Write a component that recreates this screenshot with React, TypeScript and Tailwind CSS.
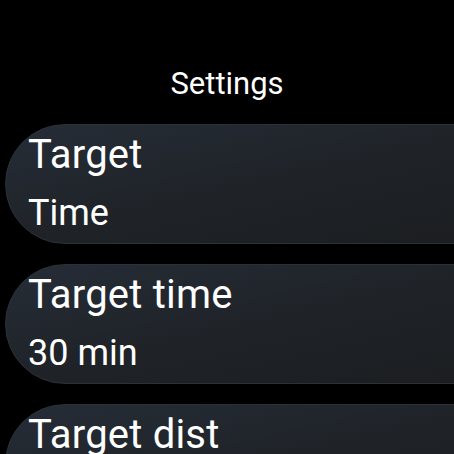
const items = [
  { label: "Target", value: "Time" },
  { label: "Target time", value: "30 min" },
  { label: "Target dist", value: "5 km" },
];

function Row({ label, value }: { label: string; value: string }) {
  return (
    <div className="flex h-[120px] w-[520px] shrink-0 flex-col rounded-l-[60px] border border-[#2c3138] bg-gradient-to-br from-[#262d37] via-[#1f2328] to-[#1b1d20] pl-[22px] pt-[7px] text-white">
      <div className="text-[40px] leading-[46px] tracking-[0.2px]">{label}</div>
      <div className="mt-[15px] text-[36px] leading-[40px]">{value}</div>
    </div>
  );
}

export default function App() {
  return (
    <div
      className="h-[454px] w-[454px] overflow-hidden bg-black"
      style={{ fontFamily: "Roboto, 'Noto Sans', sans-serif" }}
    >
      <div className="pt-[66px] text-center text-[31px] leading-[36px] text-white">
        Settings
      </div>
      <div className="mt-[22px] flex flex-col gap-[20px] pl-[5px]">
        {items.map((it) => (
          <Row key={it.label} label={it.label} value={it.value} />
        ))}
      </div>
    </div>
  );
}
